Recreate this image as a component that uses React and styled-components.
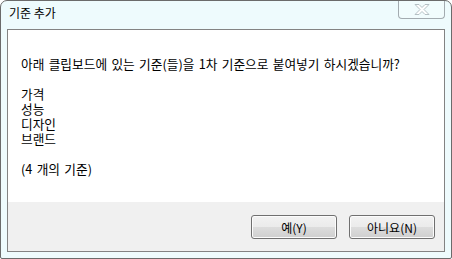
import React from 'react';
import styled, {createGlobalStyle} from "styled-components";

const GlobalStyle = createGlobalStyle`
    html, body {
        margin: 0;
        padding: 0;
        background: #ffffff;
    }
    body {
        font-family: "Noto Sans CJK KR", "Noto Sans", sans-serif;
    }
`;

const criteria = ["가격", "성능", "디자인", "브랜드"];

function CloseGlyph() {
    return (
        <svg width="16" height="11" viewBox="0 0 16 11">
            <polygon
                points="1,0.5 5,0.5 8,3.5 11,0.5 15,0.5 10,5.5 15,10.5 11,10.5 8,7.5 5,10.5 1,10.5 6,5.5"
                fill="#ffffff"
                stroke="#b4c0c4"
                strokeWidth="1"
                strokeLinejoin="round"
            />
        </svg>
    );
}

function App() {
    return (
        <>
            <GlobalStyle/>
            <Window>
                <TitleBar>
                    <Title>기준 추가</Title>
                    <CloseButton aria-label="닫기"><CloseGlyph/></CloseButton>
                </TitleBar>
                <Client>
                    <Content>
                        <Line>아래 클립보드에 있는 기준(들)을 1차 기준으로 붙여넣기 하시겠습니까?</Line>
                        <Line/>
                        {criteria.map(name => <Line key={name}>{name}</Line>)}
                        <Line/>
                        <Line>(4 개의 기준)</Line>
                    </Content>
                    <Footer>
                        <Button>예(Y)</Button>
                        <Button>아니요(N)</Button>
                    </Footer>
                </Client>
            </Window>
        </>
    );
}

const Window = styled.div`
    box-sizing: border-box;
    width: 452px;
    height: 259px;
    display: flex;
    flex-direction: column;
    background: #eefbfd;
    border: 1px solid #6b6b6b;
    border-radius: 7px 7px 2px 2px;
    overflow: hidden;
`;

const TitleBar = styled.div`
    height: 28px;
    display: flex;
    justify-content: space-between;
    align-items: flex-start;
    padding: 0 6px 0 8px;
`;

const Title = styled.span`
    margin-top: 4px;
    font-size: 12px;
    line-height: 16px;
    color: #000000;
`;

const CloseButton = styled.div`
    box-sizing: border-box;
    width: 47px;
    height: 19px;
    margin-top: -1px;
    display: flex;
    align-items: center;
    justify-content: center;
    border: 1px solid #a3abb0;
    border-top: none;
    border-radius: 0 0 4px 4px;
    background: #f1fcfd;
`;

const Client = styled.div`
    flex: 1;
    margin: 0 6px 6px;
    display: flex;
    flex-direction: column;
    border: 1px solid #838383;
    background: #ffffff;
`;

const Content = styled.div`
    height: 172px;
    box-sizing: border-box;
    padding: 26px 0 0 13px;
    background: #ffffff;
`;

const Line = styled.div`
    height: 15px;
    font-size: 12.7px;
    line-height: 15px;
    word-spacing: 1.5px;
    color: #000000;
    white-space: pre;
`;

const Footer = styled.div`
    flex: 1;
    display: flex;
    justify-content: flex-end;
    align-items: flex-start;
    gap: 12px;
    padding: 13px 9px 0 0;
    background: #f0f0f0;
`;

const Button = styled.div`
    box-sizing: border-box;
    width: 86px;
    height: 24px;
    display: flex;
    align-items: center;
    justify-content: center;
    font-size: 12px;
    color: #000000;
    border: 1px solid #707070;
    border-radius: 3px;
    box-shadow: inset 0 0 0 1px #fcfcfc;
    background: linear-gradient(#f2f2f2 0%, #ebebeb 50%, #dddddd 50%, #cfcfcf 100%);
`;

export default App;
